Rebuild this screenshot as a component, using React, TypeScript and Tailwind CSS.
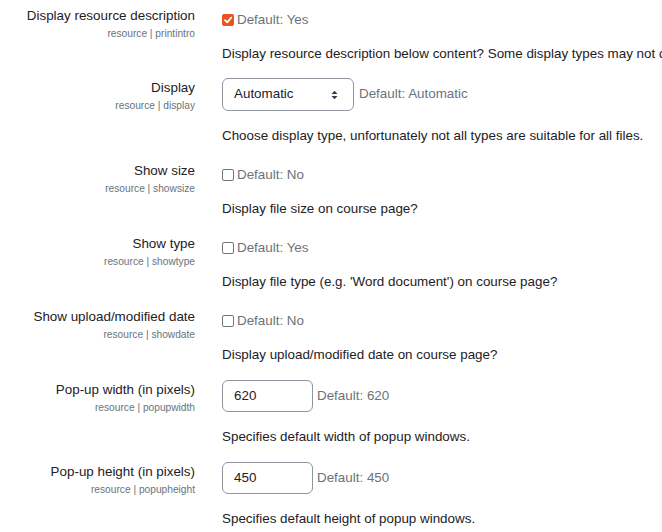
import React from "react";

const Check = ({ checked }: { checked?: boolean }) =>
  checked ? (
    <span className="inline-flex h-[12px] w-[12px] shrink-0 items-center justify-center rounded-[2px] bg-[#e8561f]">
      <svg width="10" height="10" viewBox="0 0 10 10">
        <path d="M2 5.2 L4.2 7.4 L8.2 2.6" fill="none" stroke="#fff" strokeWidth="1.8" strokeLinecap="round" strokeLinejoin="round" />
      </svg>
    </span>
  ) : (
    <span className="inline-block h-[12px] w-[12px] shrink-0 rounded-[2px] border border-[#767676] bg-white" />
  );

const Label = ({ title, short }: { title: string; short: string }) => (
  <div className="w-[195px] shrink-0 text-right">
    <div className="whitespace-nowrap text-[13.4px] leading-[20px] text-[#1d2125]">{title}</div>
    <div className="whitespace-nowrap text-[10.2px] leading-[15px] text-[#6a737b]">{short}</div>
  </div>
);

const CheckRow = ({
  title,
  short,
  checked,
  def,
  desc,
  mb = "mb-[15px]",
}: {
  title: string;
  short: string;
  checked?: boolean;
  def: string;
  desc: string;
  mb?: string;
}) => (
  <div className={`flex ${mb}`}>
    <Label title={title} short={short} />
    <div className="ml-[27px] pt-[4px]">
      <div className="flex h-[20px] items-center gap-[3px] text-[13.4px] text-[#6a737b]">
        <Check checked={checked} />
        <span>{def}</span>
      </div>
      <div className="mt-[14px] whitespace-nowrap text-[13.4px] leading-[20px] text-[#1d2125]">{desc}</div>
    </div>
  </div>
);

const InputRow = ({ title, short, value, desc }: { title: string; short: string; value: string; desc: string }) => (
  <div className="mb-[15px] flex">
    <Label title={title} short={short} />
    <div className="ml-[27px]">
      <div className="flex items-center">
        <div className="flex h-[32px] w-[91px] items-center rounded-[6px] border border-[#8f959e] bg-white pl-[11px] text-[13.4px] text-[#1d2125]">
          {value}
        </div>
        <span className="ml-[4px] text-[13.4px] text-[#6a737b]">Default: {value}</span>
      </div>
      <div className="mt-[15px] whitespace-nowrap text-[13.4px] leading-[20px] text-[#1d2125]">{desc}</div>
    </div>
  </div>
);

export default function App() {
  return (
    <div
      className="h-[532px] w-[662px] overflow-hidden bg-white pt-[6px]"
      style={{ fontFamily: '"Liberation Sans", Arial, sans-serif' }}
    >
      <CheckRow
        title="Display resource description"
        short="resource | printintro"
        checked
        def="Default: Yes"
        desc="Display resource description below content? Some display types may not display description even if enabled."
        mb="mb-[14px]"
      />
      <div className="mb-[15px] flex">
        <Label title="Display" short="resource | display" />
        <div className="ml-[27px]">
          <div className="flex items-center">
            <div className="relative flex h-[33px] w-[132px] items-center rounded-[6px] border border-[#8f959e] bg-white pl-[11px] text-[13.4px] text-[#1d2125]">
              Automatic
              <svg className="absolute right-[15px] top-1/2 -translate-y-1/2" width="7" height="10" viewBox="0 0 7 10">
                <path d="M0.5 4 L3.5 0.8 L6.5 4 Z" fill="#343a40" />
                <path d="M0.5 6 L3.5 9.2 L6.5 6 Z" fill="#343a40" />
              </svg>
            </div>
            <span className="ml-[5px] text-[13.4px] text-[#6a737b]">Default: Automatic</span>
          </div>
          <div className="mt-[15px] whitespace-nowrap text-[13.4px] leading-[20px] text-[#1d2125]">
            Choose display type, unfortunately not all types are suitable for all files.
          </div>
        </div>
      </div>
      <CheckRow
        title="Show size"
        short="resource | showsize"
        def="Default: No"
        desc="Display file size on course page?"
      />
      <CheckRow
        title="Show type"
        short="resource | showtype"
        def="Default: Yes"
        desc="Display file type (e.g. 'Word document') on course page?"
      />
      <CheckRow
        title="Show upload/modified date"
        short="resource | showdate"
        def="Default: No"
        desc="Display upload/modified date on course page?"
      />
      <InputRow
        title="Pop-up width (in pixels)"
        short="resource | popupwidth"
        value="620"
        desc="Specifies default width of popup windows."
      />
      <InputRow
        title="Pop-up height (in pixels)"
        short="resource | popupheight"
        value="450"
        desc="Specifies default height of popup windows."
      />
    </div>
  );
}
